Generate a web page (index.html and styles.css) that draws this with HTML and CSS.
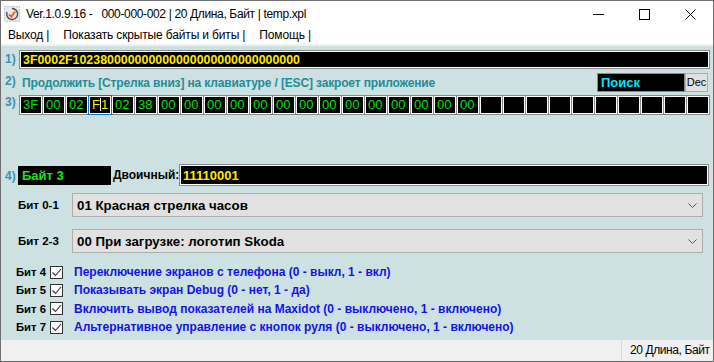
FILE: index.html
```html
<!DOCTYPE html>
<html>
<head>
<meta charset="UTF-8">
<title>Ver.1.0.9.16 - 000-000-002</title>
<link rel="stylesheet" href="styles.css">
</head>
<body>
<div class="window">
	<div class="titlebar">
		<svg class="appicon" width="16" height="16" viewBox="0 0 16 16">
			<rect x="0.5" y="0.5" width="15" height="15" fill="#e9e9e9" stroke="#9a9a9a" stroke-dasharray="1 2"/>
			<path d="M3 6 A5.5 5.5 0 1 0 8 2.5" fill="none" stroke="#4a4a4a" stroke-width="1.4"/>
			<path d="M5 8.5 L7.5 10.5 L11 5.5" fill="none" stroke="#e8662a" stroke-width="2"/>
		</svg>
		<span class="title">Ver.1.0.9.16 -   000-000-002 | 20 Длина, Байт | temp.xpl</span>
		<div class="winbtns">
			<span class="wbtn"><svg width="11" height="11" viewBox="0 0 11 11"><path d="M0 5.5 H11" stroke="#000" stroke-width="1"/></svg></span>
			<span class="wbtn"><svg width="11" height="11" viewBox="0 0 11 11"><rect x="0.5" y="0.5" width="10" height="10" fill="none" stroke="#000"/></svg></span>
			<span class="wbtn"><svg width="11" height="11" viewBox="0 0 11 11"><path d="M0.5 0.5 L10.5 10.5 M10.5 0.5 L0.5 10.5" stroke="#000" stroke-width="1"/></svg></span>
		</div>
	</div>
	<div class="menubar">
		<span class="menuitem">Выход |</span>
		<span class="menuitem">Показать скрытые байты и биты |</span>
		<span class="menuitem">Помощь |</span>
	</div>
	<div class="menuline"></div>
	<div class="client">
		<div class="row row1">
			<span class="num">1)</span>
			<div class="field hexline">3F0002F102380000000000000000000000000000</div>
		</div>
		<div class="row row2">
			<span class="num">2)</span>
			<span class="hint">Продолжить [Стрелка вниз] на клавиатуре / [ESC] закроет приложение</span>
			<div class="search">Поиск</div>
			<div class="dec">Dec</div>
		</div>
		<div class="row row3">
			<span class="num">3)</span>
			<div class="cells">
				<div class="cell">3F</div><div class="cell">00</div><div class="cell">02</div><div class="cell active">F<span class="caret"></span>1</div>
				<div class="cell">02</div><div class="cell">38</div><div class="cell">00</div><div class="cell">00</div>
				<div class="cell">00</div><div class="cell">00</div><div class="cell">00</div><div class="cell">00</div>
				<div class="cell">00</div><div class="cell">00</div><div class="cell">00</div><div class="cell">00</div>
				<div class="cell">00</div><div class="cell">00</div><div class="cell">00</div><div class="cell">00</div>
				<div class="cell"></div><div class="cell"></div><div class="cell"></div><div class="cell"></div><div class="cell"></div>
				<div class="cell"></div><div class="cell"></div><div class="cell"></div><div class="cell"></div><div class="cell"></div>
			</div>
		</div>
		<div class="row row4">
			<span class="num">4)</span>
			<div class="bytebox">Байт 3</div>
			<span class="binlabel">Двоичный:</span>
			<div class="field binfield">11110001</div>
		</div>
		<div class="selrow sel1">
			<span class="bitlabel">Бит 0-1</span>
			<div class="select">01 Красная стрелка часов
				<svg class="chev" width="9" height="5" viewBox="0 0 9 5"><path d="M0.5 0.5 L4.5 4.5 L8.5 0.5" fill="none" stroke="#555" stroke-width="1"/></svg>
			</div>
		</div>
		<div class="selrow sel2">
			<span class="bitlabel">Бит 2-3</span>
			<div class="select">00 При загрузке: логотип Skoda
				<svg class="chev" width="9" height="5" viewBox="0 0 9 5"><path d="M0.5 0.5 L4.5 4.5 L8.5 0.5" fill="none" stroke="#555" stroke-width="1"/></svg>
			</div>
		</div>
		<div class="checks">
			<div class="chk">
				<span class="chklabel">Бит 4</span>
				<span class="box"><svg width="11" height="11" viewBox="0 0 11 11"><path d="M1.5 5.5 L4.5 8.5 L10 2" fill="none" stroke="#333" stroke-width="1.1"/></svg></span>
				<span class="chktext">Переключение экранов с телефона (0 - выкл, 1 - вкл)</span>
			</div>
			<div class="chk">
				<span class="chklabel">Бит 5</span>
				<span class="box"><svg width="11" height="11" viewBox="0 0 11 11"><path d="M1.5 5.5 L4.5 8.5 L10 2" fill="none" stroke="#333" stroke-width="1.1"/></svg></span>
				<span class="chktext">Показывать экран Debug (0 - нет, 1 - да)</span>
			</div>
			<div class="chk">
				<span class="chklabel">Бит 6</span>
				<span class="box"><svg width="11" height="11" viewBox="0 0 11 11"><path d="M1.5 5.5 L4.5 8.5 L10 2" fill="none" stroke="#333" stroke-width="1.1"/></svg></span>
				<span class="chktext">Включить вывод показателей на Maxidot (0 - выключено, 1 - включено)</span>
			</div>
			<div class="chk">
				<span class="chklabel">Бит 7</span>
				<span class="box"><svg width="11" height="11" viewBox="0 0 11 11"><path d="M1.5 5.5 L4.5 8.5 L10 2" fill="none" stroke="#333" stroke-width="1.1"/></svg></span>
				<span class="chktext">Альтернативное управление с кнопок руля (0 - выключено, 1 - включено)</span>
			</div>
		</div>
	</div>
	<div class="statusbar">
		<span class="statuscell"></span>
		<span class="statuscell last">20 Длина, Байт</span>
	</div>
</div>
</body>
</html>
```

FILE: styles.css
```css
html, body{
	margin: 0;
	background-color: #fff;
	font-family: "Liberation Sans", Arial, sans-serif;
}
.window{
	width: 714px;
	height: 362px;
	box-sizing: border-box;
	border: 1px solid #6f6f6f;
	display: flex;
	flex-direction: column;
	overflow: hidden;
}
.titlebar{
	height: 25px;
	flex-shrink: 0;
	display: flex;
	align-items: center;
}
.appicon{
	margin-left: 3px;
	margin-right: 6px;
}
.title{
	font-size: 12px;
	letter-spacing: -0.35px;
	white-space: pre;
	color: #000;
}
.winbtns{
	margin-left: auto;
	display: flex;
	align-self: flex-start;
}
.wbtn{
	width: 46px;
	height: 26px;
	display: flex;
	align-items: center;
	justify-content: center;
}
.menubar{
	height: 18px;
	flex-shrink: 0;
	display: flex;
	align-items: center;
	font-size: 12px;
	letter-spacing: -0.15px;
	padding-left: 7px;
}
.menuitem{
	margin-right: 14px;
}
.menuline{
	height: 2px;
	flex-shrink: 0;
	background-color: #f0f0f0;
}
.client{
	flex: 1;
	background-color: #cde0e2;
	padding: 0 3px 0 4px;
}
.row{
	display: flex;
	align-items: center;
}
.num{
	width: 14px;
	flex-shrink: 0;
	font-size: 12px;
	font-weight: bold;
	color: #3f90a8;
}
.field{
	flex: 1;
	box-sizing: border-box;
	background-color: #000;
	border: 1px solid #8a8a8a;
	box-shadow: inset 0 0 0 1px #fff;
	font-weight: bold;
	color: #ffe800;
	padding-left: 3px;
	display: flex;
	align-items: center;
}
.row1{
	margin-top: 4px;
	height: 19px;
}
.row1 .num{
	margin-top: -2px;
}
.hexline{
	height: 19px;
	font-size: 12.4px;
}
.row2{
	margin-top: 4px;
	height: 19px;
	padding-right: 2px;
}
.row2 .num{
	margin-top: -3px;
}
.hint{
	margin-left: 3px;
	font-size: 12px;
	letter-spacing: -0.15px;
	font-weight: bold;
	color: #1f8d98;
}
.search{
	margin-left: auto;
	width: 88px;
	height: 19px;
	box-sizing: border-box;
	background-color: #000;
	border: 1px solid #8a8a8a;
	color: #00e8f8;
	font-size: 13px;
	font-weight: bold;
	padding-left: 3px;
	line-height: 17px;
}
.dec{
	width: 23px;
	height: 19px;
	box-sizing: border-box;
	background-color: #e1e1e1;
	border: 1px solid #adadad;
	font-size: 11px;
	line-height: 17px;
	text-align: center;
	color: #000;
}
.row3{
	margin-top: 3px;
	height: 20px;
}
.row3 .num{
	margin-top: -6px;
}
.cells{
	display: flex;
	gap: 1px;
	padding: 1px;
	background-color: #8a8a8a;
}
.cell{
	width: 22px;
	height: 18px;
	box-sizing: border-box;
	border: 1px solid #fff;
	background-color: #000;
	color: #00e000;
	font-size: 13px;
	line-height: 16px;
	padding-left: 2px;
}
.cell.active{
	outline: 1px solid #0078d7;
	color: #ffe800;
}
.caret{
	display: inline-block;
	width: 1px;
	height: 13px;
	background-color: #fff;
	vertical-align: -2px;
}
.row4{
	margin-top: 49px;
	height: 22px;
}
.row4 .num{
	margin-top: 2px;
}
.bytebox{
	margin-left: -1px;
	width: 93px;
	height: 19px;
	background-color: #000;
	color: #1ee01e;
	font-size: 13px;
	font-weight: bold;
	padding-left: 4px;
	box-sizing: border-box;
	line-height: 19px;
}
.binlabel{
	margin-left: 2px;
	width: 66px;
	font-size: 12px;
	font-weight: bold;
	color: #000;
}
.binfield{
	height: 22px;
	font-size: 13px;
	margin-right: 1px;
}
.selrow{
	display: flex;
	align-items: center;
	height: 24px;
}
.sel1{
	margin-top: 7px;
}
.sel2{
	margin-top: 12px;
}
.bitlabel{
	width: 67px;
	box-sizing: border-box;
	padding-left: 13px;
	flex-shrink: 0;
	font-size: 11.5px;
	font-weight: bold;
	color: #000;
}
.select{
	width: 631px;
	height: 24px;
	box-sizing: border-box;
	background-color: #e1e1e1;
	border: 1px solid #adadad;
	display: flex;
	align-items: center;
	padding-left: 4px;
	font-size: 13.3px;
	font-weight: bold;
	color: #000;
}
.chev{
	margin-left: auto;
	margin-right: 5px;
}
.checks{
	margin-top: 10px;
}
.chk{
	height: 18.33px;
	display: flex;
	align-items: center;
	font-size: 12px;
	font-weight: bold;
}
.chklabel{
	width: 45px;
	box-sizing: border-box;
	padding-left: 11px;
	flex-shrink: 0;
	font-size: 11.3px;
	color: #000;
}
.box{
	width: 13px;
	height: 13px;
	box-sizing: border-box;
	border: 1px solid #333;
	background-color: #fff;
	display: flex;
	align-items: center;
	justify-content: center;
}
.chktext{
	margin-left: 11px;
	color: #1414e6;
}
.statusbar{
	height: 21px;
	flex-shrink: 0;
	background-color: #f0f0f0;
	display: flex;
	font-size: 12px;
}
.statuscell{
	flex: 1;
}
.statuscell.last{
	flex: 0 0 auto;
	width: 83px;
	border-left: 1px solid #d7d7d7;
	padding-left: 8px;
	line-height: 21px;
	letter-spacing: -0.4px;
	white-space: nowrap;
	color: #000;
}
```
